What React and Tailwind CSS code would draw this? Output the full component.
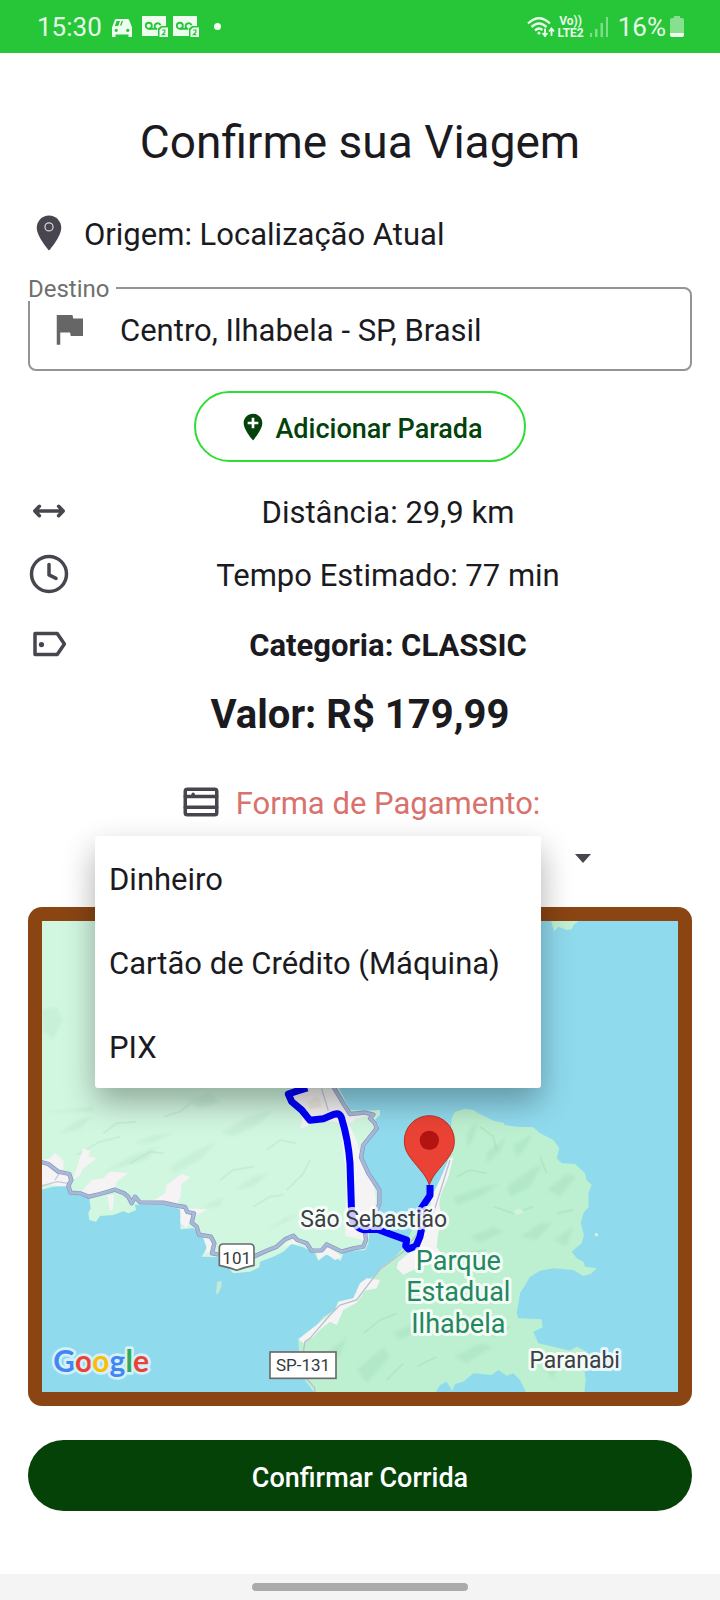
import { useState } from 'react'

const PAYMENTS = ['Dinheiro', 'Cartão de Crédito (Máquina)', 'PIX']

const PIN = 'M12 2C8.14 2 5 5.14 5 9c0 5.25 7 13 7 13s7-7.75 7-13c0-3.86-3.14-7-7-7z'

function Icon({ children, className = 'size-[42px]' }) {
  return (
    <svg
      viewBox="0 0 24 24"
      className={`shrink-0 ${className}`}
      fill="none"
      stroke="currentColor"
      strokeWidth="2"
      strokeLinecap="round"
      strokeLinejoin="round"
      aria-hidden="true"
    >
      {children}
    </svg>
  )
}

function VoicemailIcon() {
  return (
    <svg viewBox="0 0 26 21" className="w-[26px] h-[21px]" aria-hidden="true">
      <path d="M0 0h24v10h-5l-3 2.500V20H0z" fill="#effcf0" />
      <g fill="none" stroke="#26c638" strokeWidth="1.900">
        <circle cx="6.800" cy="9.800" r="3" />
        <path d="M6.800 12.800h8.500M13.500 12.300a3 3 0 1 1 5-3" />
      </g>
      <path d="M20 11.500h6V21h-8.500v-7z" fill="#effcf0" />
      <path d="M20 14h2.800v2.200L20.300 18.700h3" fill="none" stroke="#26c638" strokeWidth="1.200" />
    </svg>
  )
}

function StatusBar() {
  return (
    <header className="flex h-[53px] items-center justify-between bg-[#26c638] pl-[37px] pr-9 text-[#e6fae8]">
      <div className="flex items-center">
        <span className="text-[26px] leading-8">15:30</span>
        <svg viewBox="0 0 20 18" className="ml-2.5 mt-0.5 h-[18px] w-5" fill="#effcf0" aria-hidden="true">
          <path fillRule="evenodd" d="M4.500 0h11q1.400 0 1.800 1.200L20 8.500V18h-3.500v-2.500h-13V18H0V8.500L2.700 1.200Q3.100 0 4.500 0zM4.600 2L2.800 7h3.400L8 2zm5 0L8 6.500h1.500L11 2zM4.200 9.800a1.600 1.600 0 1 0 .01 0zm11.600 0a1.600 1.600 0 1 0 .01 0z" />
        </svg>
        <div className="ml-2.5 flex gap-[5px]">
          <VoicemailIcon />
          <VoicemailIcon />
        </div>
        <span className="ml-[15px] size-[7px] rounded-full bg-[#effcf0]" />
      </div>
      <div className="flex items-center">
        <svg viewBox="0 0 28 22" className="h-[22px] w-7" fill="none" stroke="currentColor" strokeWidth="2.400" aria-hidden="true">
          <path d="M1 7.500Q12 -3 23 7.500M4.500 11Q12 4 19.500 11M8 14.500q4-3.500 7.500-.5" />
          <circle cx="12" cy="17" r="1.600" fill="currentColor" stroke="none" />
          <path d="M18 12.500v7M15.500 17l2.500 3 2.500-3M24.500 20v-7M22 15.500l2.500-3 2.500 3" strokeWidth="1.800" />
        </svg>
        <div className="ml-0.5 text-center text-xs leading-3 font-bold">
          <div>Vo))</div>
          <div>LTE2</div>
        </div>
        <svg viewBox="0 0 18 20" className="ml-1.5 h-5 w-[18px]" fill="#7edd88" aria-hidden="true">
          <path d="M0 16h2v4H0zM5 12h2.500v8H5zM10.500 6H13v14h-2.500zM16 0h2v20h-2z" />
        </svg>
        <span className="ml-2.5 text-[26px] leading-8">16%</span>
        <svg viewBox="0 0 14 21" className="ml-1 h-[21px] w-3.5" aria-hidden="true">
          <path d="M4 0h6v2h2q2 0 2 2v13H0V4q0-2 2-2h2z" fill="#87e08f" />
          <path d="M0 17h14v2q0 2-2 2H2q-2 0-2-2z" fill="#effcf0" />
        </svg>
      </div>
    </header>
  )
}

function InfoRow({ icon, children, className }) {
  return (
    <div className={`flex h-[42px] items-center gap-[14px] ${className}`}>
      <span className="text-[#49454f]">{icon}</span>
      <p className="flex-1 pt-1 text-center">{children}</p>
    </div>
  )
}

const ROAD_COAST =
  'M60 245L85 252L115 275L148 282L154 300L145 318L152 338L180 340L207 350L240 342L285 329L312 340L325 350L335 370L345 350L360 367L430 368L470 377L495 381L502 396L522 400L515 428L530 440L537 464L573 470L583 490L576 520L610 526L705 528L740 512L770 500L795 478L820 467L832 480L860 490L875 512L905 511L920 493L965 515L1000 505L1030 500L1038 480L1035 455L1062 410L1078 372L1078 330L1045 280L1023 232L1030 195L1070 145L1065 130L1050 115L1060 104L1035 98L990 102L970 70L940 20'

const ROAD_ISLAND =
  'M1290 240L1240 400L1150 515L1080 568L1040 620L1010 660L960 675L930 705L900 740L870 775L855 785L850 815L855 890L885 925L883 940'

const ROUTE =
  'M862 24L835 32L805 42L815 65L845 90L870 121L910 116L942 103Q958 98 964 112Q985 180 990 250L995 405Q998 440 1030 449L1072 448L1110 462L1160 480L1157 498L1165 507L1188 498L1200 470L1206 440L1202 388L1230 346L1230 315'

function RouteMap() {
  return (
    <svg
      viewBox="66 -477 1908 1413"
      preserveAspectRatio="xMidYMid slice"
      className="block h-[471px] w-full"
      role="img"
      aria-label="Mapa da rota"
    >
      <rect x="66" y="-477" width="1908" height="1413" fill="#90daee" />
      {/* mainland */}
      <path
        fill="#d2f7e1"
        d="M60 -480H1300L1000 -100L955 20L990 90L1035 92L1080 90L1080 105L1066 118L1076 135L1062 160L1028 195L1026 232L1048 278L1080 330L1084 372L1070 410L1048 450L1045 490L1036 510L1000 512L970 520L962 542L940 530L918 524L895 542L885 520L850 502L815 492L790 515L760 530L720 545L718 562L690 575L640 580L625 565L600 532L545 530L560 505L552 478L540 458L520 445L482 448L480 420L492 400L480 388L440 374L345 374L348 390L325 400L310 394L280 405L240 408L228 425L208 420L205 400L212 385L208 355L150 340L140 318L100 320L60 330z"
      />
      <path fill="#c3efd3" d="M1593 -480L1602 -445L1615 -460L1640 -450L1655 -452L1660 -465L1680 -480z" />
      {/* shaded relief */}
      <g fill="#b6e3c8" opacity="0.35" className="blur-[5px]">
        <path d="M66 95L220 80L220 95L66 96zM66 -210L110 -220L130 -180L100 -120L66 -150z" />
        <path d="M250 275L340 225L420 195L380 240L300 262zM450 262L520 215L590 185L540 240L460 280zM600 160L680 110L760 90L720 130L640 170z" />
        <path d="M120 160L170 120L215 110L180 150zM500 60L570 40L600 65L540 85zM340 190L400 165L460 160L400 190z" />
        <path d="M740 450L790 415L850 395L800 425zM640 330L700 290L745 280L700 320zM540 385L610 350L600 380z" />
      </g>
      <g fill="none" stroke="#ade0c3" strokeWidth="6" opacity="0.35" className="blur-[2px]">
        <path d="M170 225L240 185L300 170M330 250L390 215L430 220M600 300L640 270L700 260M740 210L780 180L830 190M700 380L750 350L790 345" />
        <path d="M250 160L290 130L350 125M430 110L480 95L510 70M800 330L850 280L870 240" />
      </g>
      {/* built-up areas */}
      <g fill="#f5f3f4">
        <path d="M66 240L88 236L105 218L130 242L130 270L155 280L158 300L190 205L210 212L206 230L230 235L190 265L180 285L160 300L150 290L148 320L66 312z" />
        <path d="M185 335L215 300L250 295L270 275L325 280L290 305L285 328L240 335L207 345zM262 345L282 345L278 390L270 392z" />
        <path d="M400 362L435 340L440 315L485 282L510 292L485 312L482 350L470 372zM480 385L562 388L530 405L512 425L500 445L482 430zM550 475L580 480L582 510L555 520L560 500z" />
        <path d="M820 26H950L985 95L1035 102L1050 130L1015 120L985 130L1010 180L1025 240L1060 310L1068 360L1060 420L1035 480L975 468L980 300L960 130L905 118L840 148L850 105L815 75z" />
        <path d="M785 500L820 478L850 492L815 492zM890 520L925 500L965 530L945 540L920 522L895 540z" />
      </g>
      <path fill="#d2f7e1" d="M1000 120L1035 108L1056 130L1030 165L1012 185L992 140z" />
      <path fill="#efebe0" d="M860 65L895 50L905 80L870 88z" />
      <path d="M905 26L925 92M66 318L110 305L145 310M105 300L118 280" fill="none" stroke="#c6c9da" strokeWidth="4" />

      {/* island */}
      <path
        fill="#bdf0d1"
        d="M1295 115L1305 95L1335 86L1360 90L1375 100L1420 122L1450 128L1455 135L1490 140L1540 142L1560 160L1600 180L1618 205L1610 235L1625 250L1665 252L1695 280L1700 300L1715 315L1705 340L1706 380L1690 400L1682 430L1692 465L1685 490L1655 515L1670 535L1690 545L1695 560L1730 565L1712 582L1690 588L1660 570L1600 565L1560 572L1530 590L1512 620L1500 640L1497 660L1490 700L1495 715L1565 718L1568 742L1540 755L1555 790L1600 800L1650 812L1670 800L1700 815L1692 860L1697 900L1693 940H1520L1500 900L1480 880L1460 887L1435 870L1415 885L1360 880L1330 905L1305 912L1297 932L1280 905L1260 915L1245 940H885L858 905L840 860L835 780L850 765L890 735L910 710L945 690L955 665L1000 655L1020 610L1060 590L1080 565L1120 535L1150 505L1200 400L1242 335L1268 290L1288 230z"
      />
      <path fill="#c4ecd4" d="M592 605L604 603L605 618L595 640L588 642L590 620z" />
      <circle cx="1729" cy="464" r="5" fill="#d9f5ea" />
      <g fill="#9fd9b8" opacity="0.35" className="blur-[5px]">
        <path d="M1340 160L1370 125L1362 175L1340 210zM1400 215L1460 170L1440 215L1400 250zM1480 195L1540 160L1520 200L1490 235z" />
        <path d="M1300 350L1390 320L1440 310L1380 350L1310 375zM1460 320L1530 270L1570 250L1530 320L1470 350zM1580 330L1640 280L1670 290L1620 350z" />
        <path d="M1350 470L1420 440L1450 455L1380 490zM1500 470L1560 430L1600 425L1550 480zM1600 480L1660 440L1640 500z" />
        <path d="M1120 760L1180 730L1220 745L1140 780zM1010 870L1090 800L1110 830L1040 910zM1300 830L1380 790L1420 800L1340 850zM920 820L980 770L960 830zM1560 850L1620 830L1600 900z" />
      </g>
      <g fill="none" stroke="#94d6b0" strokeWidth="6" opacity="0.3" className="blur-[2px]">
        <path d="M1310 290L1350 270L1400 280M1420 380L1480 400L1540 380M1560 230L1580 280M1610 400L1660 390M1380 140L1420 170L1430 210" />
        <path d="M1030 760L1080 720L1130 700M1190 860L1250 830M1420 770L1470 740M1100 900L1150 850M1330 520L1400 510" />
      </g>
      <path fill="#dcf4da" opacity="0.8" d="M1478 395L1500 385L1512 396L1490 404z" />
      <path
        fill="#f5f3f4"
        d="M1286 238L1300 232L1285 290L1262 345L1258 372L1265 420L1255 460L1250 500L1275 540L1200 560L1150 584L1130 565L1135 545L1190 500L1225 440L1235 350L1262 295zM1020 610L1040 595L1080 600L1070 625L1035 632L1010 668L970 690L950 735L930 725L905 745L880 770L850 790L835 778L890 735L945 690L955 665L1000 655z"
      />

      <path d={ROAD_ISLAND} fill="none" stroke="#b9bfd0" strokeWidth="4" />
      <path d={ROAD_COAST} fill="none" stroke="#8797bf" strokeWidth="13" strokeLinejoin="round" />
      <path d={ROAD_COAST} fill="none" stroke="#a8b9d8" strokeWidth="9" strokeLinejoin="round" />
      <path d={ROUTE} fill="none" stroke="#0000fa" strokeWidth="21" strokeLinejoin="round" />

      {/* destination pin */}
      <path
        fill="#ea4335"
        stroke="#b8322a"
        strokeWidth="3"
        d="M1228 107a75 75 0 0 0-75 75c0 28 12 44 30 66c20 25 36 40 45 67c9-27 25-42 45-67c18-22 30-38 30-66a75 75 0 0 0-75-75z"
      />
      <circle cx="1228" cy="181" r="29" fill="#b31412" />

      {/* road shields */}
      <path d="M610 492h80q12 0 12 12v52q-26 5-52 15q-26-10-52-15v-52q0-12 12-12z" fill="#fff" stroke="#6b6b6b" strokeWidth="5" />
      <rect x="750" y="816" width="198" height="79" fill="#fff" stroke="#6b6b6b" strokeWidth="5" />
      <g fill="#36393d" textAnchor="middle" fontSize="51">
        <text x="650" y="551">101</text>
        <text x="849" y="874">SP-131</text>
      </g>

      <g fontSize="69" textAnchor="middle" stroke="#ffffff" strokeOpacity="0.8" strokeWidth="18" strokeLinejoin="round" className="[paint-order:stroke]">
        <text x="1061" y="440" fill="#3c4043">São Sebastião</text>
        <text x="1664" y="863" fill="#3c4043">Paranabi</text>
        <g fontSize="81" fill="#24875f">
          <text x="1315" y="571">Parque</text>
          <text x="1315" y="664">Estadual</text>
          <text x="1315" y="758">Ilhabela</text>
        </g>
      </g>
      <text x="100" y="876" fontSize="90" stroke="#d4f0f8" strokeWidth="16" strokeLinejoin="round" className="font-['Lato',sans-serif] font-bold [paint-order:stroke]">
        <tspan fill="#4285f4">G</tspan>
        <tspan fill="#ea4335">o</tspan>
        <tspan fill="#fbbc05">o</tspan>
        <tspan fill="#4285f4">g</tspan>
        <tspan fill="#34a853">l</tspan>
        <tspan fill="#ea4335">e</tspan>
      </text>
    </svg>
  )
}

export default function App() {
  const [open, setOpen] = useState(true)
  const [payment, setPayment] = useState(PAYMENTS[0])
  const [destination, setDestination] = useState('Centro, Ilhabela - SP, Brasil')

  function choose(option) {
    setPayment(option)
    setOpen(false)
  }

  return (
    <div className="flex min-h-screen flex-col bg-white font-['Roboto',sans-serif] text-[31px] leading-[42px] text-[#1b1b1f]">
      <StatusBar />

      <main className="flex flex-col px-7">
        <h1 className="mt-[58px] text-center text-[46px] leading-[62px]">Confirme sua Viagem</h1>

        {/* Origin */}
        <div className="mt-[39px] flex h-[42px] items-center gap-[14px]">
          <span className="text-[#49454f]">
            <Icon>
              <path d={PIN} fill="currentColor" stroke="none" />
              <circle cx="12" cy="8.500" r="2.300" stroke="#d8d6da" strokeWidth="0.700" />
            </Icon>
          </span>
          <p className="pt-1">Origem: Localização Atual</p>
        </div>

        {/* Destination */}
        <div className="relative mt-[33px] flex h-[84px] items-center gap-[30px] rounded-lg border-2 border-[#949494] pl-[18px] pr-4">
          <label htmlFor="destino" className="absolute -top-3 -left-0.5 bg-white pr-1.5 text-[24px] leading-6 text-[#6f6f6f]">
            Destino
          </label>
          <Icon className="size-[42px] text-[#666666]">
            <path d="M14.400 6L14 4H5v17h2v-7h5.600l.4 2h7V6z" fill="currentColor" stroke="none" />
          </Icon>
          <input
            id="destino"
            value={destination}
            onChange={(e) => setDestination(e.target.value)}
            className="min-w-0 flex-1 bg-transparent pt-1 outline-none"
          />
        </div>

        <button
          type="button"
          className="mt-5 flex h-[71px] items-center gap-1.5 self-center rounded-full border-2 border-[#2fdd35] px-[41px] text-[27px] font-medium text-[#03420a]"
        >
          <Icon className="size-8">
            <path d={`${PIN}m4 8h-3v3h-2v-3H8V8h3V5h2v3h3v2z`} fill="currentColor" fillRule="evenodd" stroke="none" />
          </Icon>
          <span className="pt-1">Adicionar Parada</span>
        </button>

        {/* Trip info */}
        <InfoRow
          className="mt-7"
          icon={
            <Icon>
              <path d="M4 12h16M6.500 9.300L3.900 12l2.600 2.700M17.500 9.300l2.600 2.700-2.600 2.700" />
            </Icon>
          }
        >
          Distância: 29,9 km
        </InfoRow>
        <InfoRow
          className="mt-[21px]"
          icon={
            <Icon>
              <circle cx="12" cy="12" r="10" />
              <path d="M12 6.500v6l4 2" />
            </Icon>
          }
        >
          Tempo Estimado: 77 min
        </InfoRow>
        <InfoRow
          className="mt-7 font-bold"
          icon={
            <Icon>
              <path d="M4 6h12.700l4.100 6-4.100 6H4z" />
              <circle cx="7.700" cy="12.300" r="1.500" fill="currentColor" stroke="none" />
            </Icon>
          }
        >
          Categoria: CLASSIC
        </InfoRow>

        <p className="mt-[25px] text-center text-[40px] leading-[50px] font-bold">Valor: R$ 179,99</p>

        {/* Payment */}
        <div className="mt-[41px] flex h-[42px] items-center justify-center gap-[14px]">
          <span className="text-[#49454f]">
            <Icon>
              <rect x="3" y="4.700" width="18" height="14.600" rx="1.200" />
              <path d="M3 8.800h18M3 15h18M7.500 7.500v.5" />
            </Icon>
          </span>
          <p id="forma" className="pt-1 text-[#d9716c]">
            Forma de Pagamento:
          </p>
        </div>

        <div className="relative mt-[13px] w-[530px] self-center">
          <button
            type="button"
            aria-haspopup="listbox"
            aria-expanded={open}
            aria-labelledby="forma"
            onClick={() => setOpen(!open)}
            className="flex h-11 w-full items-center justify-between px-[34px]"
          >
            <span>{open ? '' : payment}</span>
            <svg viewBox="0 0 16 9" className="h-[9px] w-4" fill="#49454f" aria-hidden="true">
              <path d="M0 0h16L8 9z" />
            </svg>
          </button>
          {open && (
            <ul
              role="listbox"
              aria-labelledby="forma"
              className="absolute top-0 left-0 z-10 w-[446px] rounded-[3px] bg-white shadow-[0_14px_32px_rgba(0,0,0,0.32)]"
            >
              {PAYMENTS.map((option) => (
                <li key={option} role="option" aria-selected={option === payment}>
                  <button type="button" onClick={() => choose(option)} className="h-[84px] w-full px-[14px] pt-1 text-left">
                    {option}
                  </button>
                </li>
              ))}
            </ul>
          )}
        </div>

        <div className="mt-[27px] overflow-hidden rounded-[14px] bg-[#8b4513] p-[14px]">
          <RouteMap />
        </div>

        <button type="button" className="mt-[34px] h-[71px] rounded-full bg-[#054208] pt-1 text-[27px] font-medium text-white">
          Confirmar Corrida
        </button>
      </main>

      <footer className="mt-auto flex h-[26px] justify-center bg-[#f4f4f4] pt-[9px]">
        <span className="h-2 w-[216px] rounded-full bg-[#aaaaaa]" />
      </footer>
    </div>
  )
}
